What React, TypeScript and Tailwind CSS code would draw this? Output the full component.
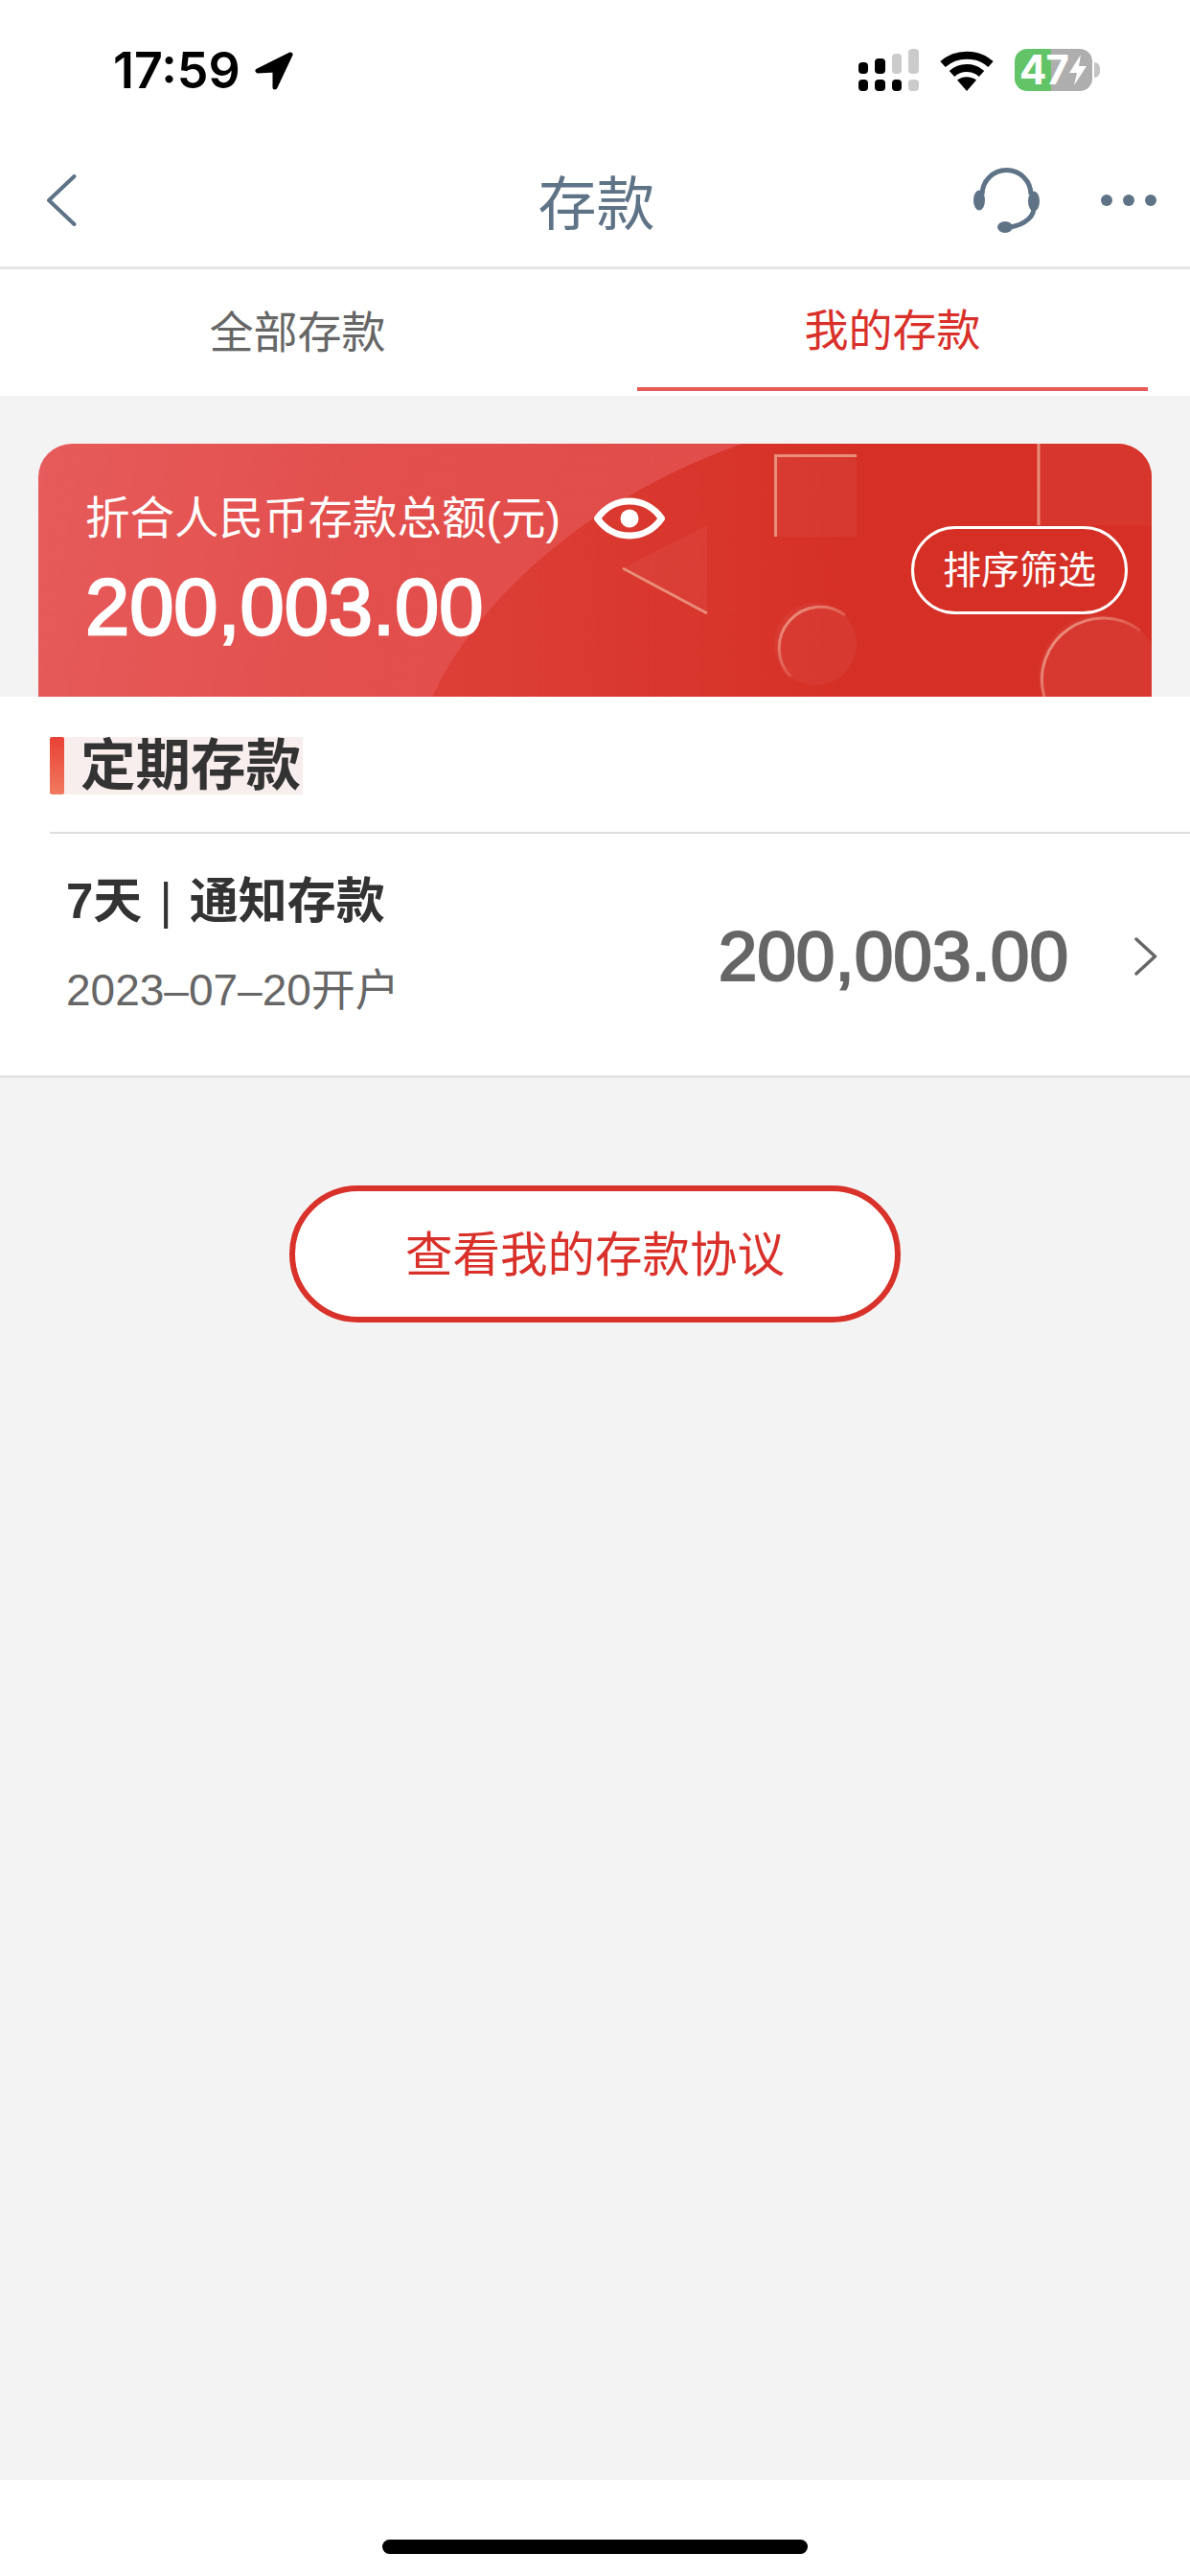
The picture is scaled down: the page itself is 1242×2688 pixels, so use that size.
import React from "react";

const CardArt = () => (
  <svg className="absolute inset-0" width="1162" height="264" viewBox="0 0 1162 264" fill="none">
    <defs>
      <linearGradient id="dark" gradientUnits="userSpaceOnUse" x1="400" y1="0" x2="850" y2="0">
        <stop offset="0" stopColor="#dd4037" />
        <stop offset="1" stopColor="#d63026" />
      </linearGradient>
      <linearGradient id="arcA" gradientUnits="userSpaceOnUse" x1="768" y1="166" x2="850" y2="250">
        <stop offset="0" stopColor="#f0a694" />
        <stop offset="0.75" stopColor="#f0a694" stopOpacity="0" />
      </linearGradient>
      <linearGradient id="arcB" gradientUnits="userSpaceOnUse" x1="1044" y1="179" x2="1150" y2="264">
        <stop offset="0" stopColor="#f0a694" />
        <stop offset="0.8" stopColor="#f0a694" stopOpacity="0.1" />
      </linearGradient>
    </defs>
    <path d="M411 264 C 465 150 590 50 735 0 L1162 0 L1162 264 Z" fill="url(#dark)" />
    <rect x="768" y="11" width="86" height="86" fill="#ffffff" fillOpacity="0.045" />
    <path d="M769.5 97 V12.5 H854" stroke="#e98d7b" strokeWidth="3" />
    <path d="M610 130 L698 85 V177 Z" fill="#ffffff" fillOpacity="0.045" />
    <path d="M610 130 L698 177" stroke="#e98d7b" strokeWidth="3" />
    <circle cx="811" cy="209" r="43" fill="#ffffff" fillOpacity="0.045" />
    <path d="M785 243 A43 43 0 0 1 842 179" stroke="url(#arcA)" strokeWidth="3" />
    <rect x="1044" y="0" width="118" height="85" fill="#ffffff" fillOpacity="0.03" />
    <path d="M1044 0 V85" stroke="#e98d7b" strokeWidth="3" />
    <circle cx="1108" cy="243" r="64" fill="#ffffff" fillOpacity="0.045" />
    <path d="M1050 264 A64 64 0 0 1 1150 195" stroke="url(#arcB)" strokeWidth="3" />
  </svg>
);

export default function App() {
  return (
    <div className="flex flex-col h-[2688px] w-[1242px] bg-[#f3f3f3] font-['Liberation_Sans','Noto_Sans_CJK_SC',sans-serif]">
      {/* status bar */}
      <div className="flex h-[140px] bg-white pl-[118px] pr-[94px] pt-[46px] justify-between items-start">
        <div className="flex items-center gap-[15px] h-[56px]">
          <span className="font-['Inter',sans-serif] font-semibold text-[52px] leading-[56px] text-black">17:59</span>
          <svg width="40" height="40" viewBox="0 0 40 40">
            <path d="M37 3 L3 20 L21 19 L21 37 Z" fill="#000" stroke="#000" strokeWidth="5" strokeLinejoin="round" />
          </svg>
        </div>
        <div className="flex items-start gap-[22px] pt-[5px]">
          <svg width="64" height="44" viewBox="0 0 64 44">
            <rect x="1" y="14" width="10" height="12" rx="4" fill="#000" />
            <rect x="18" y="10" width="11" height="16" rx="4" fill="#000" />
            <rect x="36" y="5" width="10" height="21" rx="4" fill="#cbcbcb" />
            <rect x="53" y="0" width="11" height="26" rx="4" fill="#cbcbcb" />
            <rect x="1" y="32" width="10" height="12" rx="4" fill="#000" />
            <rect x="18" y="32" width="11" height="12" rx="4" fill="#000" />
            <rect x="36" y="32" width="10" height="12" rx="4" fill="#000" />
            <rect x="53" y="32" width="11" height="12" rx="4" fill="#cbcbcb" />
          </svg>
          <svg width="56" height="42" viewBox="0 0 56 42" className="mt-[2px]">
            <path d="M3 14 C 17 1.5, 39 1.5, 53 14" stroke="#000" strokeWidth="8" fill="none" />
            <path d="M12.5 24 C 21 16, 35 16, 43.5 24" stroke="#000" strokeWidth="8" fill="none" />
            <path d="M18 30.5 C 24 26, 32 26, 38 30.5 L28 42 Z" fill="#000" />
          </svg>
          <div className="flex items-center gap-[2px]">
            <div className="flex items-center justify-center w-[81px] h-[44px] rounded-[13px] bg-[linear-gradient(90deg,#62c467_47%,#aeaeae_47%)]">
              <span className="font-['Inter',sans-serif] font-bold text-[42px] leading-[44px] tracking-[-1px] text-white">47</span>
              <svg width="20" height="36" viewBox="0 0 20 34">
                <path d="M13 1 L1 20 H9 L6 33 L19 13 H11 Z" fill="#fff" />
              </svg>
            </div>
            <div className="w-[6px] h-[16px] rounded-r-full bg-[#c4c4c4]" />
          </div>
        </div>
      </div>

      {/* nav */}
      <div className="flex items-center justify-between h-[138px] bg-white pl-[48px] pr-[35px]">
        <div className="w-[290px]">
          <svg width="32" height="54" viewBox="0 0 32 54" fill="none">
            <path d="M29.5 2 L3 27 L29.5 52" stroke="#5f7387" strokeWidth="4" strokeLinecap="round" strokeLinejoin="round" />
          </svg>
        </div>
        <span className="text-[61px] leading-[70px] text-[#5f7387] pt-[10px]">存款</span>
        <div className="flex w-[300px] justify-end items-center gap-[63px]">
          <svg width="72" height="72" viewBox="0 0 72 72" fill="none" className="mt-[2px]">
            <path d="M11 29 A25.5 25.5 0 0 1 62 29" stroke="#5f7387" strokeWidth="5" />
            <path d="M65 44 C64 55 50 63 36 63" stroke="#5f7387" strokeWidth="5" />
            <ellipse cx="8" cy="35" rx="6" ry="10.5" fill="#5f7387" />
            <ellipse cx="65" cy="36" rx="6" ry="10.5" fill="#5f7387" />
            <ellipse cx="35" cy="63" rx="8" ry="6" fill="#5f7387" />
          </svg>
          <div className="flex gap-[11px]">
            <div className="w-[12px] h-[12px] rounded-full bg-[#5f7387]" />
            <div className="w-[12px] h-[12px] rounded-full bg-[#5f7387]" />
            <div className="w-[12px] h-[12px] rounded-full bg-[#5f7387]" />
          </div>
        </div>
      </div>
      <div className="h-[3px] bg-[#e6e6e6]" />

      {/* tabs */}
      <div className="grid grid-cols-2 h-[132px] bg-white">
        <div className="flex items-center justify-center pt-[1px] text-[46px] text-[#666666]">全部存款</div>
        <div className="flex flex-col items-center">
          <div className="flex flex-1 items-center pt-[6px] text-[46px] text-[#d9302a]">我的存款</div>
          <div className="w-[533px] h-[4px] mb-[5px] bg-[#ea5a58]" />
        </div>
      </div>

      {/* total card */}
      <div className="relative flex mt-[50px] mx-[40px] h-[264px] overflow-hidden rounded-t-[35px] bg-[linear-gradient(100deg,#e65b5b_0%,#e24f4c_30%,#e04a46_100%)] justify-between items-center pl-[49px] pr-[25px]">
        <CardArt />
        <div className="relative self-start pt-[48px]">
          <div className="flex items-center gap-[35px]">
            <span className="text-[46.5px] leading-[60px] text-white">折合人民币存款总额(元)</span>
            <svg width="74" height="44" viewBox="0 0 74 44" fill="none">
              <path d="M3.5 22 C 20 -2, 54 -2, 70.5 22 C 54 46, 20 46, 3.5 22 Z" stroke="#fff" strokeWidth="7" strokeLinejoin="round" />
              <circle cx="37" cy="22" r="9.5" fill="#fff" />
            </svg>
          </div>
          <div className="mt-[18px] text-[83px] leading-[90px] text-white [-webkit-text-stroke:2.4px_#ffffff]">200,003.00</div>
        </div>
        <div className="relative flex items-center justify-center w-[226px] h-[92px] rounded-full border-[3px] border-white text-[40px] text-white">排序筛选</div>
      </div>

      {/* fixed deposits */}
      <div className="bg-white">
        <div className="flex pl-[52px] pt-[42px] pb-[39px]">
          <div className="w-[15px] h-[60px] rounded-[2px] bg-[linear-gradient(180deg,#e84135,#f07a5f)]" />
          <div className="h-[60px] pl-[17px] pr-[2px] bg-[#f9eeee] text-[57.5px] leading-[60px] font-bold text-[#333333]">定期存款</div>
        </div>
        <div className="ml-[52px] h-[2px] bg-[#dddddd]" />
        <div className="flex h-[252px] justify-between items-center pl-[69px] pr-[34px]">
          <div className="self-start pt-[41px]">
            <div className="text-[51px] leading-[60px] font-bold text-[#333333]">7天<span className="mx-[18px] font-normal">|</span>通知存款</div>
            <div className="mt-[34px] text-[46px] leading-[56px] text-[#666666]">2023–07–20开户</div>
          </div>
          <div className="flex items-center gap-[69px] pt-[4px]">
            <span className="text-[73px] leading-[80px] text-[#666666] [-webkit-text-stroke:2.2px_#666666]">200,003.00</span>
            <svg width="24" height="40" viewBox="0 0 24 40" fill="none">
              <path d="M2 2 L21.5 20 L2 38" stroke="#666666" strokeWidth="3.5" strokeLinecap="round" strokeLinejoin="round" />
            </svg>
          </div>
        </div>
        <div className="h-[3px] bg-[#e3e3e3]" />
      </div>

      {/* agreement button */}
      <div className="flex flex-1 justify-center pt-[112px]">
        <div className="flex items-center justify-center w-[638px] h-[143px] pt-[3px] rounded-full border-[6px] border-[#d8322a] bg-white text-[49.5px] text-[#d9302a]">查看我的存款协议</div>
      </div>

      {/* home indicator */}
      <div className="flex h-[100px] justify-center bg-white pt-[62px]">
        <div className="w-[444px] h-[15px] rounded-full bg-black" />
      </div>
    </div>
  );
}
